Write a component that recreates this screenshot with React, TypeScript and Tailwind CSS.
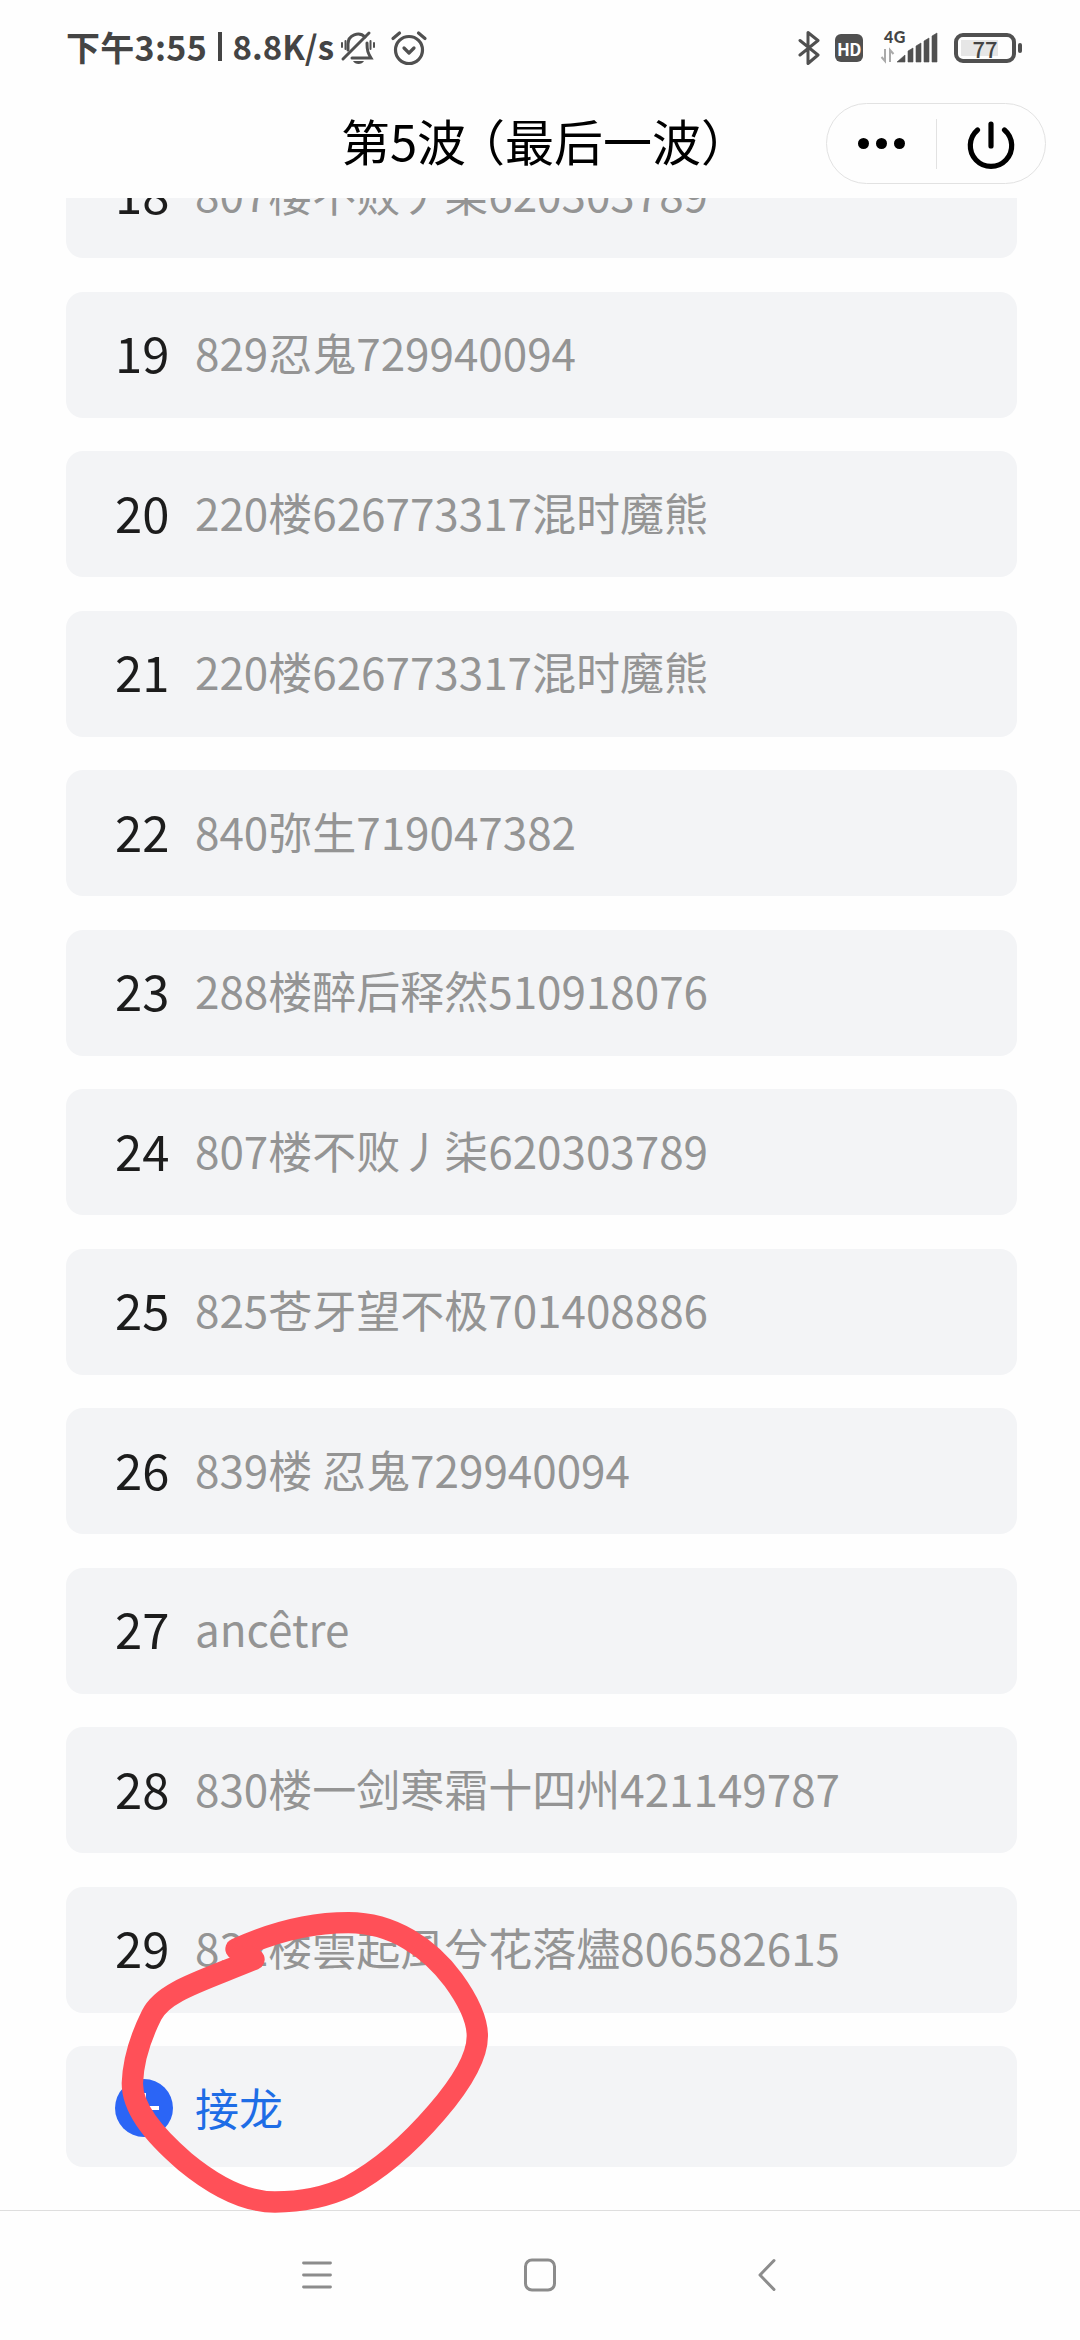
const rows = [
  { no: 18, text: "807楼不败丿柒620303789" },
  { no: 19, text: "829忍鬼729940094" },
  { no: 20, text: "220楼626773317混时魔熊" },
  { no: 21, text: "220楼626773317混时魔熊" },
  { no: 22, text: "840弥生719047382" },
  { no: 23, text: "288楼醉后释然510918076" },
  { no: 24, text: "807楼不败丿柒620303789" },
  { no: 25, text: "825苍牙望不极701408886" },
  { no: 26, text: "839楼 忍鬼729940094" },
  { no: 27, text: "ancêtre" },
  { no: 28, text: "830楼一剑寒霜十四州421149787" },
  { no: 29, text: "832楼雲起風兮花落燼806582615" },
];

function StatusBar() {
  return (
    <div className="flex h-24 items-center pl-[66px] pr-[58px] text-[#444]">
      <div className="flex w-[268px] items-center justify-between pb-[3px] text-[34px] font-bold leading-none">
        <span className="whitespace-nowrap tracking-[0.3px]">下午3:55</span>
        <span className="h-[29px] w-1 bg-[#444]" />
        <span className="text-[33px]">8.8K/s</span>
      </div>

      {/* Muted bell */}
      <svg width="36" height="36" viewBox="0 0 36 36" className="ml-[6px]" fill="none" stroke="#505050" strokeWidth="3" strokeLinecap="round">
        <path d="M8 20v-6c0-9 11-13 17-7M27 13c0 8 1 10 4 15H12" />
        <path d="M3 29L29 3" />
        <path d="M2 13v4M5.500 11v8M30.500 11v8M34 13v4" strokeWidth="2" />
        <path d="M13 31h11c-2 4-9 4-11 0z" fill="#505050" stroke="none" />
      </svg>

      {/* Alarm clock */}
      <svg width="38" height="36" viewBox="0 0 38 36" className="ml-[14px]" fill="none" stroke="#505050" strokeWidth="3.2" strokeLinecap="round" strokeLinejoin="round">
        <circle cx="19" cy="20" r="13.500" />
        <path d="M14 18l5 5 5-5M3 8.500L9.500 3M35 8.500L28.500 3" />
      </svg>

      <div className="ml-auto flex items-center">
        {/* Bluetooth */}
        <svg width="22" height="36" viewBox="0 0 22 36" fill="none" stroke="#505050" strokeWidth="3" strokeLinejoin="round" strokeLinecap="round">
          <path d="M2 10.500l18 14.500-10 8.500v-31l10 8L2 25" />
        </svg>
        <div className="ml-[15px] flex size-7 items-center justify-center rounded-md bg-[#505050] text-[17px] font-bold leading-none tracking-[-0.5px] text-white">
          HD
        </div>
        <Signal />
        <Battery />
      </div>
    </div>
  );
}

function Signal() {
  return (
    <div className="ml-4 flex h-9 w-[60px] flex-col">
      <span className="ml-[5px] -mt-[1px] h-[15px] font-['Lato','Noto_Sans_CJK_SC',sans-serif] text-[16px] font-black leading-[15px] tracking-[0.5px]">4G</span>
      <svg width="60" height="36" viewBox="0 0 60 36" className="-mt-[14px]" fill="#505050">
        <path d="M6 19v12l-3.500-4M11 32V20l3.500 4" fill="none" stroke="#aaa" strokeWidth="2" />
        <path d="M18 32l8-7v7zM29 32V21l5-3v14zM37 32V16l5-3v19zM45 32V11l5-3v24zM53 32V6l5-3v29z" stroke="#505050" strokeWidth="0.600" strokeLinejoin="round" />
      </svg>
    </div>
  );
}

function Battery() {
  return (
    <div className="ml-[15px] flex items-center">
      <div className="relative flex h-[30px] w-[62px] items-center justify-center rounded-[9px] border-4 border-[#505050] leading-none">
        <span className="absolute inset-y-[3px] left-[3px] w-[37px] bg-[#e6e6e6]" />
        <span className="relative text-[22px] font-medium leading-[22px]">77</span>
      </div>
      <span className="ml-[2px] h-[10px] w-1 rounded-sm bg-[#505050]" />
    </div>
  );
}

function TitleBar() {
  return (
    <header className="grid h-[95px] grid-cols-[1fr_auto_1fr] items-center">
      <span />
      <h1 className="pb-[9px] pl-[11px] text-[49px] leading-none text-black">
        第5波<span className="-ml-[10px]">（</span>最后一波）
      </h1>
      <div className="mr-[34px] flex h-[81px] w-[220px] items-center justify-self-end rounded-full border border-[#e2e2e2]">
        <div className="flex flex-1 items-center justify-center gap-[7px]">
          <span className="size-[11px] rounded-full bg-black" />
          <span className="size-[11px] rounded-full bg-black" />
          <span className="size-[11px] rounded-full bg-black" />
        </div>
        <span className="h-[50px] w-px bg-[#e2e2e2]" />
        <div className="flex flex-1 items-center justify-center">
          <svg width="54" height="54" viewBox="0 0 54 54" fill="none" stroke="#000" strokeWidth="5.2" strokeLinecap="round">
            <path d="M13.500 13A20.700 20.700 0 1 0 40.500 13M27 7v22" />
          </svg>
        </div>
      </div>
    </header>
  );
}

function NavBar() {
  return (
    <nav className="flex h-[130px] items-center border-t border-[#dedede] pb-[2px] pl-[296px]">
      <svg width="42" height="42" viewBox="0 0 42 42" fill="none" stroke="#8c8c8c" strokeWidth="2.800" strokeLinecap="round">
        <path d="M7.500 9h27M7.500 21h27M7.500 33h27" />
      </svg>
      <svg width="42" height="42" viewBox="0 0 42 42" className="ml-[181px]" fill="none" stroke="#8c8c8c" strokeWidth="3">
        <rect x="6.500" y="6" width="29" height="30" rx="6.500" />
      </svg>
      <svg width="42" height="42" viewBox="0 0 42 42" className="ml-[185px]" fill="none" stroke="#8c8c8c" strokeWidth="3" strokeLinecap="round" strokeLinejoin="round">
        <path d="M28 6.500L14 21l14 14.500" />
      </svg>
    </nav>
  );
}

export default function App() {
  return (
    <div className="relative flex h-[2340px] w-[1080px] flex-col overflow-hidden bg-[#fefefe] font-['Noto_Sans_CJK_SC',sans-serif]">
      <StatusBar />
      <TitleBar />

      {/* Sign-up list, scrolled to the end */}
      <main className="mt-[7px] flex min-h-0 flex-1 flex-col justify-end gap-[33.5px] overflow-hidden pb-[43px] pl-[66px] pr-[63px]">
        {rows.map((row) => (
          <div key={row.no} className="flex h-[126px] shrink-0 items-center rounded-[17px] bg-[#f3f4f6] pb-[5px] pl-[49px]">
            <span className="w-20 pb-px text-[49px] leading-none text-[#1c1c1c]">{row.no}</span>
            <span className="text-[44px] leading-none text-[#949494]">{row.text}</span>
          </div>
        ))}
        <div className="flex h-[121px] shrink-0 items-center rounded-[17px] bg-[#f3f4f6] pl-[49px]">
          <div className="mr-[22px] mt-[2px] flex size-[58px] items-center justify-center rounded-full bg-[#2b65f6]">
            <svg width="30" height="30" viewBox="0 0 30 30" stroke="#fff" strokeWidth="4">
              <path d="M15 0v30M0 15h30" />
            </svg>
          </div>
          <span className="text-[44px] leading-none text-[#1e6de6]">接龙</span>
        </div>
      </main>

      <NavBar />

      {/* Hand-drawn marker ring */}
      <svg
        className="absolute left-[100px] top-[1880px]"
        width="420"
        height="340"
        viewBox="0 0 1260 1020"
        fill="none"
        stroke="#ff5058"
        strokeWidth="64"
        strokeLinecap="round"
        strokeLinejoin="round"
      >
        <path d="M408 207C500 165 620 128 745 128C880 128 990 205 1060 300C1105 362 1132 420 1132 468C1132 530 1085 610 1010 697C930 790 840 870 745 920C670 955 600 966 525 966C430 966 340 915 255 845C150 755 97 680 97 610C100 530 125 465 155 405C190 335 300 305 462 238L408 207" />
      </svg>
    </div>
  );
}
